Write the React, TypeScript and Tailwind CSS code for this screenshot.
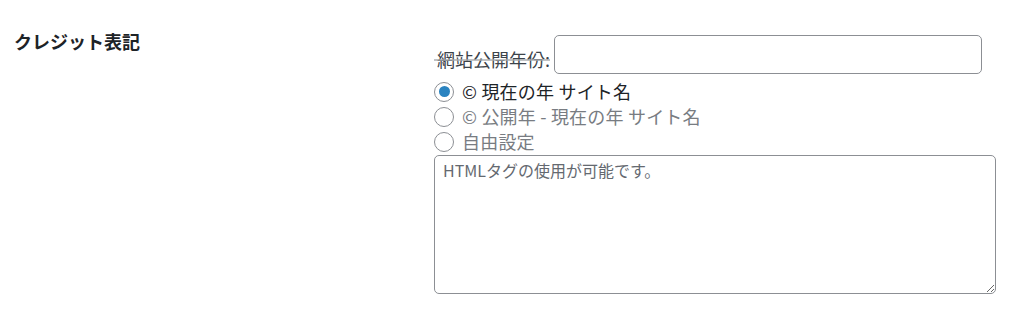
import { useState } from "react";

const font = {
  fontFamily: '"Noto Sans CJK JP", "Noto Sans", sans-serif',
};

export default function App() {
  const [choice, setChoice] = useState("current");

  const options = [
    { id: "current", label: "© 現在の年 サイト名" },
    { id: "range", label: "© 公開年 - 現在の年 サイト名" },
    { id: "custom", label: "自由設定" },
  ];

  return (
    <div className="flex h-[316px] w-[1024px] bg-white text-[#1d2327]" style={font}>
      {/* Row heading */}
      <div className="w-[434px] shrink-0 pl-[14px] pt-[28px]">
        <h3 className="text-[18px] font-bold leading-[26px]">クレジット表記</h3>
      </div>

      {/* Field */}
      <div className="flex w-[562px] flex-col pt-[35px]">
        <div className="flex items-end">
          <label className="relative mb-[4px] pl-[3px] text-[18px] leading-[22px] text-[#3c434a]">
            網站公開年份:
            <span className="absolute left-0 right-0 top-[11px] h-[2px] bg-[#a7aaad]/70" />
          </label>
          <input
            type="text"
            className="ml-[4px] h-[39px] w-[428px] rounded-[5px] border border-[#8c8f94] px-2 text-[16px] outline-none"
          />
        </div>

        <div className="mt-[5px] flex flex-col">
          {options.map((o) => {
            const checked = choice === o.id;
            return (
              <label key={o.id} className="flex h-[25px] cursor-pointer items-center">
                <span className="flex h-[20px] w-[20px] shrink-0 items-center justify-center rounded-full border border-[#8c8f94] bg-white">
                  {checked && <span className="h-[11px] w-[11px] rounded-full bg-[#2a83c0]" />}
                </span>
                <input
                  type="radio"
                  name="credit"
                  className="hidden"
                  checked={checked}
                  onChange={() => setChoice(o.id)}
                />
                <span
                  className={
                    "ml-[8px] text-[18px] leading-[25px] tracking-[0.2px] " +
                    (checked ? "text-[#1d2327]" : "text-[#787c82]")
                  }
                >
                  {o.label}
                </span>
              </label>
            );
          })}
        </div>

        <textarea
          className="mt-[1px] h-[139px] w-[562px] rounded-[5px] border border-[#8c8f94] px-[8px] py-[3px] text-[16px] leading-[22px] text-[#3c434a] outline-none placeholder:text-[#646970]"
          placeholder="HTMLタグの使用が可能です。"
          style={font}
        />
      </div>
    </div>
  );
}
